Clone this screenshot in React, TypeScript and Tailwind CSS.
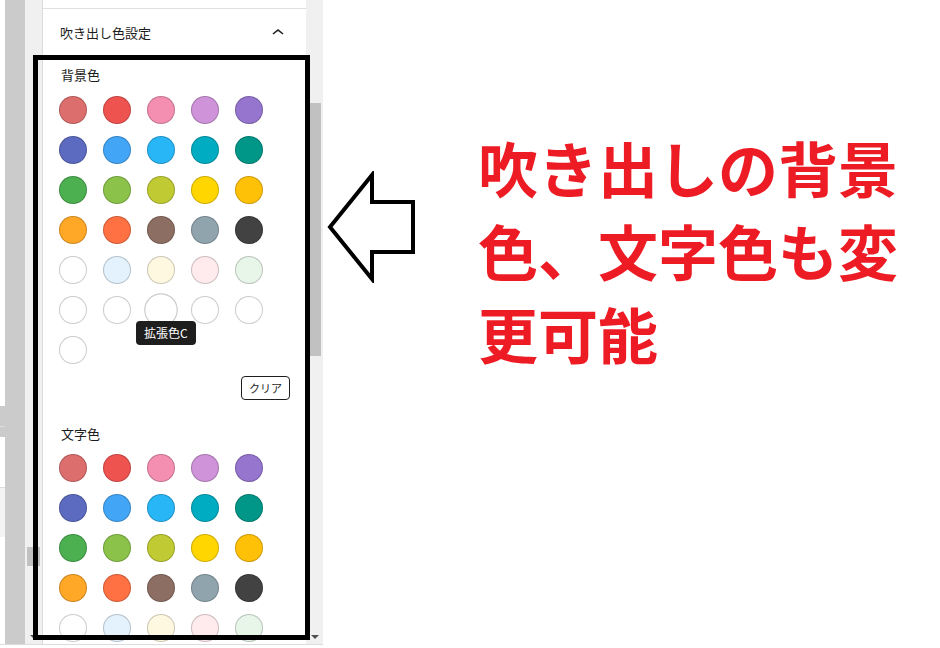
import React from 'react';

const palette = [
  'bg-[#dd6e6e]', 'bg-[#ef5350]', 'bg-[#f48fb1]', 'bg-[#ce93d8]', 'bg-[#9575cd]',
  'bg-[#5c6bc0]', 'bg-[#42a5f5]', 'bg-[#29b6f6]', 'bg-[#00acc1]', 'bg-[#009688]',
  'bg-[#4caf50]', 'bg-[#8bc34a]', 'bg-[#c0ca33]', 'bg-[#ffd600]', 'bg-[#ffc107]',
  'bg-[#ffa726]', 'bg-[#ff7043]', 'bg-[#8d6e63]', 'bg-[#90a4ae]', 'bg-[#424242]',
  'bg-[#ffffff]', 'bg-[#e3f2fd]', 'bg-[#fff8e1]', 'bg-[#ffebee]', 'bg-[#e8f5e9]',
];

// 拡張色A〜F (unset, white)
const extra = ['bg-white', 'bg-white', 'bg-white', 'bg-white', 'bg-white', 'bg-white'];

const font = { fontFamily: '"Noto Sans CJK JP", "Noto Sans", sans-serif' };

function Swatches({ withExtra, hoverIndex }: { withExtra?: boolean; hoverIndex?: number }) {
  const colors = withExtra ? [...palette, ...extra] : palette;
  return (
    <div className="grid grid-cols-[repeat(5,28px)] gap-x-4 gap-y-3">
      {colors.map((c, i) => (
        <div key={i} className="relative w-7 h-7">
          <div
            className={`w-7 h-7 rounded-full border border-black/20 ${c} ${
              i === hoverIndex ? 'scale-[1.2]' : ''
            }`}
          />
          {i === hoverIndex && (
            <div className="absolute top-[25px] left-[-11px] z-10 h-6 px-2 flex items-center rounded-sm bg-[#1e1e1e] text-white text-[12px] whitespace-nowrap">
              拡張色C
            </div>
          )}
        </div>
      ))}
    </div>
  );
}

function Triangle() {
  return <div className="w-0 h-0 border-x-[4px] border-x-transparent border-t-[4px] border-t-[#505050]" />;
}

export default function App() {
  return (
    <div className="relative w-[940px] h-[648px] overflow-hidden bg-white text-[#1e1e1e]" style={font}>
      <div className="flex">
        {/* left editor column */}
        <div className="flex h-[645px] w-[323px] border-b border-[#dcdcdc]">
          <div className="w-[5px] flex flex-col">
            <div className="h-[406px]" />
            <div className="h-[20px] bg-[#cbcbcb]" />
            <div className="h-[1px] bg-[#dedede]" />
            <div className="h-[10px] bg-[#cbcbcb]" />
            <div className="h-[50px]" />
            <div className="h-[50px] bg-[#f4f4f4] border-t border-[#dddddd]" />
          </div>
          <div className="w-[20px] bg-[#cbcbcb]" />
          <div className="w-[17px] bg-[#f0f0f0] flex flex-col items-center">
            <div className="h-[547px]" />
            <div className="h-[19px] w-[13px] bg-[#c1c1c1]" />
            <div className="flex-1" />
            <div className="mb-[5px]">
              <Triangle />
            </div>
          </div>
          <div className="w-[1px] bg-[#dcdcdc]" />

          {/* sidebar panel */}
          <div className="w-[263px] overflow-hidden flex flex-col">
            <div className="h-[9px] shrink-0 border-b border-[#e0e0e0]" />
            <div className="h-[48px] shrink-0 flex items-center justify-between pl-[17px] pr-4">
              <span className="text-[13px]">吹き出し色設定</span>
              <svg width="24" height="24" viewBox="0 0 24 24" className="fill-[#1e1e1e]">
                <path d="M6.5 12.4L12 8l5.5 4.4-.9 1.2L12 10l-4.6 3.6-1-1.2z" />
              </svg>
            </div>
            <div className="px-4 pt-[10px]">
              <div className="text-[13px] leading-4 ml-[2px] mb-[13px]">背景色</div>
              <Swatches withExtra hoverIndex={27} />
              <div className="flex justify-end mt-3">
                <button className="h-6 px-[7px] border border-[#1e1e1e] rounded-sm text-[11px] bg-white">
                  クリア
                </button>
              </div>
              <div className="text-[13px] leading-4 ml-[2px] mt-[26px] mb-3">文字色</div>
              <Swatches />
            </div>
          </div>

          {/* panel scrollbar */}
          <div className="w-[17px] bg-[#f0f0f0] flex flex-col">
            <div className="h-[103px]" />
            <div className="h-[253px] w-[11px] ml-[4px] bg-[#c1c1c1]" />
            <div className="flex-1" />
            <div className="mb-[5px] ml-[5px]">
              <Triangle />
            </div>
          </div>
        </div>

        {/* annotation side */}
        <div className="flex items-start">
          <svg width="92" height="112" viewBox="0 0 92 112" className="ml-[3px] mt-[171px]">
            <polygon
              points="4,56 46,4 46,31 87,31 87,81 46,81 46,108"
              fill="white"
              stroke="black"
              strokeWidth="4"
            />
          </svg>
          <div className="ml-[60px] mt-[125px] w-[430px] text-[60px] leading-[83px] font-bold text-[#ed1c24]">
            吹き出しの背景色、文字色も変更可能
          </div>
        </div>
      </div>

      {/* highlight frame */}
      <div className="absolute left-[33px] top-[55px] w-[277px] h-[585px] border-[5px] border-black pointer-events-none" />
    </div>
  );
}
